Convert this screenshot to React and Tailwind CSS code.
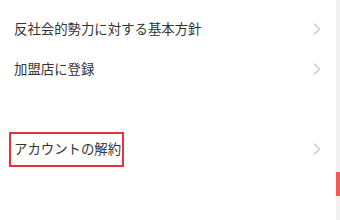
import React from "react";

function Chevron() {
  return (
    <svg width="8" height="12" viewBox="0 0 8 12" fill="none" className="shrink-0">
      <path d="M1.5 1 L6.5 6 L1.5 11" stroke="#c4c4c4" strokeWidth="1.2" strokeLinecap="round" strokeLinejoin="round" />
    </svg>
  );
}

function Row({ children }) {
  return (
    <div className="flex h-[40px] items-center justify-between pl-[14px] pr-[15px]">
      {children}
      <Chevron />
    </div>
  );
}

export default function App() {
  return (
    <div
      className="flex h-[220px] w-[340px] overflow-hidden bg-white text-[#333333]"
      style={{ fontFamily: '"Noto Sans CJK JP", "Noto Sans", sans-serif' }}
    >
      <div className="flex-1 pt-[9px] text-[13.4px] leading-none">
        <Row>
          <span>反社会的勢力に対する基本方針</span>
        </Row>
        <Row>
          <span>加盟店に登録</span>
        </Row>
        <div className="h-[40px]" />
        <Row>
          <span className="-ml-[5px] flex h-[35px] items-center border-2 border-[#e8323a] pl-[3px] pr-[1px]">
            アカウントの解約
          </span>
        </Row>
      </div>
      <div className="w-[4px] bg-[#f1f1f1] pt-[172px]">
        <div className="h-[24px] bg-[#f25a5e]" />
      </div>
    </div>
  );
}
